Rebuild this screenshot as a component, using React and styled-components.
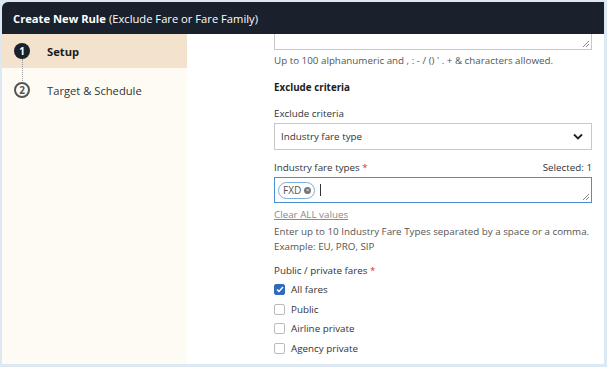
import React from "react";
import styled, { createGlobalStyle } from "styled-components";

const GlobalStyle = createGlobalStyle`
  html, body {
    margin: 0;
    padding: 0;
    background: #dce9f2;
  }
  body {
    font-family: "Open Sans", "Liberation Sans", sans-serif;
    color: #333;
  }
`;

const Frame = styled.div`
  width: 607px;
  height: 367px;
  box-sizing: border-box;
  padding: 2px 3px 3px 2px;
  background: #dce9f2;
  overflow: hidden;
`;

const Panel = styled.div`
  height: 100%;
  display: flex;
  flex-direction: column;
  background: #fff;
  border-top-left-radius: 6px;
  overflow: hidden;
`;

const Header = styled.div`
  height: 32px;
  flex-shrink: 0;
  background: #1b212c;
  color: #fff;
  display: flex;
  align-items: center;
  padding-left: 11px;
  font-size: 11.2px;
`;

const HeaderStrong = styled.span`
  font-weight: 700;
  margin-right: 3px;
`;

const Body = styled.div`
  flex: 1;
  display: flex;
  min-height: 0;
`;

const Sidebar = styled.div`
  width: 185px;
  flex-shrink: 0;
  background: #fdfbf4;
  display: flex;
  flex-direction: column;
`;

const Step = styled.div`
  height: ${(p) => (p.active ? "34px" : "44px")};
  background: ${(p) => (p.active ? "#f4e3cc" : "transparent")};
  display: flex;
  align-items: center;
  padding-left: 12px;
  gap: 17px;
  position: relative;
  font-size: 11.2px;
  font-weight: ${(p) => (p.active ? 700 : 400)};
  color: ${(p) => (p.active ? "#1b1b1b" : "#333")};
`;

const StepNum = styled.span`
  width: 16px;
  height: 16px;
  box-sizing: border-box;
  border-radius: 50%;
  display: flex;
  align-items: center;
  justify-content: center;
  font-size: 10px;
  font-weight: 700;
  background: ${(p) => (p.active ? "#1b212c" : "transparent")};
  color: ${(p) => (p.active ? "#fff" : "#555")};
  border: ${(p) => (p.active ? "none" : "2px solid #555")};
`;

const Connector = styled.span`
  position: absolute;
  left: 20px;
  top: 25px;
  height: 24px;
  border-left: 1px dotted #999;
`;

const Content = styled.div`
  flex: 1;
  padding: 0 12px 0 87px;
  font-size: 9.8px;
  line-height: 15px;
  color: #333;
`;

const TextArea = styled.div`
  height: 15px;
  border: 1px solid #c8c8c8;
  border-top: none;
  position: relative;
`;

const Grip = styled.svg`
  position: absolute;
  right: 2px;
  bottom: 2px;
`;

const Hint = styled.div`
  color: #555;
  white-space: nowrap;
  margin-top: ${(p) => p.mt || 0}px;
`;

const SectionTitle = styled.div`
  font-weight: 700;
  color: #1b1b1b;
  margin-top: 12px;
`;

const Label = styled.div`
  display: flex;
  justify-content: space-between;
  margin-top: ${(p) => p.mt || 0}px;
  margin-bottom: 2px;
  color: #333;
`;

const Req = styled.span`
  color: #d33;
`;

const Select = styled.div`
  height: 27px;
  box-sizing: border-box;
  border: 1px solid #c8c8c8;
  display: flex;
  align-items: center;
  justify-content: space-between;
  padding: 0 8px 0 6px;
`;

const TagInput = styled.div`
  height: 26px;
  box-sizing: border-box;
  border: 1px solid #4a8fd3;
  display: flex;
  align-items: center;
  padding: 0 3px;
  gap: 5px;
  position: relative;
`;

const Tag = styled.span`
  display: inline-flex;
  align-items: center;
  gap: 3px;
  border: 1px solid #7aaee0;
  border-radius: 9px;
  padding: 0 3px 0 4px;
  height: 15px;
  font-size: 10px;
  color: #555;
`;

const Close = styled.span`
  width: 7px;
  height: 7px;
  border-radius: 50%;
  background: #777;
  color: #fff;
  font-size: 6px;
  line-height: 7px;
  text-align: center;
`;

const Caret = styled.span`
  width: 1px;
  height: 12px;
  background: #333;
`;

const ClearLink = styled.a`
  display: block;
  margin-top: 4px;
  color: #8a8a8a;
  text-decoration: underline;
`;

const CheckList = styled.div`
  display: flex;
  flex-direction: column;
  gap: 6px;
  margin-top: 5px;
`;

const CheckRow = styled.label`
  display: flex;
  align-items: center;
  gap: 6px;
  height: 13.5px;
`;

const Box = styled.span`
  width: 11px;
  height: 11px;
  box-sizing: border-box;
  border-radius: 2px;
  border: 1px solid ${(p) => (p.checked ? "#2f6bbf" : "#bbb")};
  background: ${(p) => (p.checked ? "#2f6bbf" : "#fff")};
  display: flex;
  align-items: center;
  justify-content: center;
`;

const fares = [
  { name: "All fares", checked: true },
  { name: "Public" },
  { name: "Airline private" },
  { name: "Agency private" },
];

export default function App() {
  return (
    <>
      <GlobalStyle />
      <Frame>
        <Panel>
          <Header>
            <HeaderStrong>Create New Rule</HeaderStrong>
            (Exclude Fare or Fare Family)
          </Header>
          <Body>
            <Sidebar>
              <Step active>
                <StepNum active>1</StepNum>
                Setup
                <Connector />
              </Step>
              <Step>
                <StepNum>2</StepNum>
                Target &amp; Schedule
              </Step>
            </Sidebar>
            <Content>
              <TextArea>
                <Grip width="7" height="7" viewBox="0 0 7 7">
                  <path d="M1 7L7 1M4 7L7 4" stroke="#888" strokeWidth="1" />
                </Grip>
              </TextArea>
              <Hint mt={3}>
                Up to 100 alphanumeric and , : - / () ' . + &amp; characters allowed.
              </Hint>
              <SectionTitle>Exclude criteria</SectionTitle>
              <Label mt={11}>Exclude criteria</Label>
              <Select>
                <span>Industry fare type</span>
                <svg width="10" height="7" viewBox="0 0 10 7">
                  <path d="M1 1.5L5 5.5L9 1.5" fill="none" stroke="#222" strokeWidth="1.8" />
                </svg>
              </Select>
              <Label mt={10}>
                <span>
                  Industry fare types <Req>*</Req>
                </span>
                <span>Selected: 1</span>
              </Label>
              <TagInput>
                <Tag>
                  FXD <Close>×</Close>
                </Tag>
                <Caret />
                <Grip width="7" height="7" viewBox="0 0 7 7">
                  <path d="M1 7L7 1M4 7L7 4" stroke="#888" strokeWidth="1" />
                </Grip>
              </TagInput>
              <ClearLink>Clear ALL values</ClearLink>
              <Hint mt={2}>
                Enter up to 10 Industry Fare Types separated by a space or a comma.
                <br />
                Example: EU, PRO, SIP
              </Hint>
              <Label mt={9}>
                <span>
                  Public / private fares <Req>*</Req>
                </span>
              </Label>
              <CheckList>
                {fares.map((f) => (
                  <CheckRow key={f.name}>
                    <Box checked={f.checked}>
                      {f.checked && (
                        <svg width="8" height="7" viewBox="0 0 8 7">
                          <path d="M1 3.5L3 5.5L7 1" fill="none" stroke="#fff" strokeWidth="1.5" />
                        </svg>
                      )}
                    </Box>
                    {f.name}
                  </CheckRow>
                ))}
              </CheckList>
            </Content>
          </Body>
        </Panel>
      </Frame>
    </>
  );
}
